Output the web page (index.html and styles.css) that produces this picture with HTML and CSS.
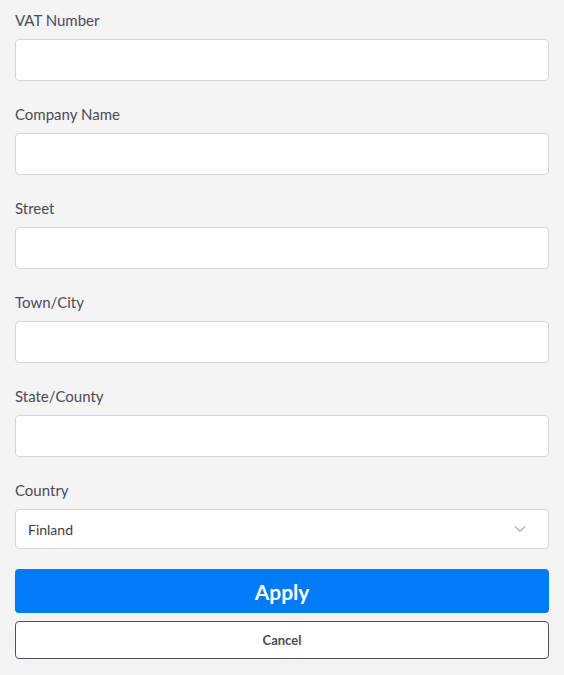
FILE: index.html
```html
<!DOCTYPE html>
<html lang="en">
<head>
    <meta charset="UTF-8">
    <meta name="viewport" content="width=device-width, initial-scale=1.0">
    <title>Billing Details</title>
    <link rel="stylesheet" href="styles.css">
</head>
<body>
    <form class="billing-form">
        <div class="field">
            <label class="label" for="vat">VAT Number</label>
            <input class="input" id="vat" type="text">
        </div>
        <div class="field">
            <label class="label" for="company">Company Name</label>
            <input class="input" id="company" type="text">
        </div>
        <div class="field">
            <label class="label" for="street">Street</label>
            <input class="input" id="street" type="text">
        </div>
        <div class="field">
            <label class="label" for="town">Town/City</label>
            <input class="input" id="town" type="text">
        </div>
        <div class="field">
            <label class="label" for="state">State/County</label>
            <input class="input" id="state" type="text">
        </div>
        <div class="field field-last">
            <label class="label" for="country">Country</label>
            <div class="select-wrap">
                <select class="select" id="country">
                    <option>Finland</option>
                </select>
                <svg class="chevron" width="12" height="8" viewBox="0 0 12 8">
                    <path d="M1 1.5 L6 6.5 L11 1.5" fill="none" stroke="#a9a9b8" stroke-width="1.1"/>
                </svg>
            </div>
        </div>
        <div class="actions">
            <button class="btn btn-apply" type="button">Apply</button>
            <button class="btn btn-cancel" type="button">Cancel</button>
        </div>
    </form>
</body>
</html>
```

FILE: styles.css
```css
body {
    background-color: #f4f4f4;
    color: #4b4b57;
    font-family: Lato, 'Open Sans', sans-serif;
    margin: 0;
}

.billing-form {
    padding: 10px 15px 16px;
    display: flex;
    flex-direction: column;
}

.field {
    display: flex;
    flex-direction: column;
    margin-bottom: 23px;
}

.field-last {
    margin-bottom: 20px;
}

.label {
    font-size: 15px;
    line-height: 20px;
    margin-bottom: 9px;
}

.input {
    height: 42px;
    box-sizing: border-box;
    border: 1px solid #d5d5df;
    border-radius: 4px;
    background: #fff;
    margin: 0;
    padding: 0 12px;
    font-family: inherit;
    font-size: 14px;
}

.select-wrap {
    position: relative;
}

.select {
    width: 100%;
    height: 40px;
    box-sizing: border-box;
    border: 1px solid #d5d5df;
    border-radius: 4px;
    background: #fff;
    padding: 0 12px;
    font-family: inherit;
    font-size: 14px;
    color: #3d3d47;
    appearance: none;
    -webkit-appearance: none;
}

.chevron {
    position: absolute;
    right: 23px;
    top: 16px;
    pointer-events: none;
}

.actions {
    display: flex;
    flex-direction: column;
    gap: 8px;
}

.btn {
    font-family: inherit;
    font-weight: 700;
    border-radius: 4px;
    cursor: pointer;
}

.btn-apply {
    height: 44px;
    background: #007bf5;
    border: none;
    color: #fff;
    font-size: 21px;
}

.btn-cancel {
    height: 38px;
    background: #fff;
    border: 1px solid #4f4f63;
    color: #4b4b57;
    font-size: 13px;
}
```
